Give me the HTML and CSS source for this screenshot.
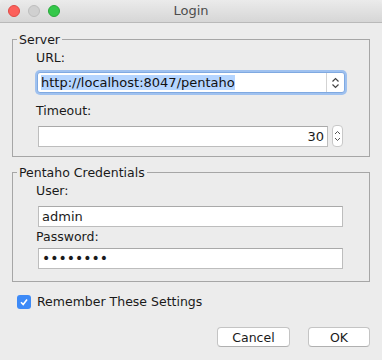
FILE: index.html
```html
<!DOCTYPE html>
<html lang="en">
<head>
  <meta charset="UTF-8">
  <title>Login</title>
  <link rel="stylesheet" href="styles.css">
</head>
<body>
  <div class="window">
    <div class="titlebar">
      <div class="lights">
        <span class="light close"></span>
        <span class="light min"></span>
        <span class="light max"></span>
      </div>
      <div class="title">Login</div>
    </div>

    <div class="content">
      <fieldset class="group server">
        <legend>Server</legend>
        <label class="field-label">URL:</label>
        <div class="combo">
          <span class="combo-text"><span class="selected">http://localhost:8047/pentaho</span></span>
          <span class="combo-btn">
            <svg width="9" height="12" viewBox="0 0 9 12"><path d="M1.5 4.5 L4.5 1.5 L7.5 4.5 M1.5 7.5 L4.5 10.5 L7.5 7.5" fill="none" stroke="#444" stroke-width="1.2"/></svg>
          </span>
        </div>
        <label class="field-label">Timeout:</label>
        <div class="spin-row">
          <div class="text-input number">30</div>
          <span class="stepper">
            <svg width="7" height="12" viewBox="0 0 7 12"><path d="M1 4 L3.5 1.5 L6 4 M1 8 L3.5 10.5 L6 8" fill="none" stroke="#555" stroke-width="1"/></svg>
          </span>
        </div>
      </fieldset>

      <fieldset class="group creds">
        <legend>Pentaho Credentials</legend>
        <label class="field-label">User:</label>
        <div class="text-input user">admin</div>
        <label class="field-label pass-label">Password:</label>
        <div class="text-input dots">••••••••</div>
      </fieldset>

      <div class="remember">
        <span class="checkbox">
          <svg width="10" height="10" viewBox="0 0 10 10"><path d="M2 5.2 L4.2 7.5 L8 2.5" fill="none" stroke="#fff" stroke-width="1.6"/></svg>
        </span>
        <span>Remember These Settings</span>
      </div>

      <div class="buttons">
        <button class="btn cancel">Cancel</button>
        <button class="btn ok">OK</button>
      </div>
    </div>
  </div>
</body>
</html>
```

FILE: styles.css
```css
body {
  margin: 0;
  background: #ececec;
}
.window {
  width: 382px;
  height: 360px;
  background: #ececec;
  border-radius: 5px 5px 0 0;
  overflow: hidden;
  font-family: "DejaVu Sans", sans-serif;
  font-size: 12.5px;
  color: #1a1a1a;
}
.titlebar {
  position: relative;
  height: 22px;
  background: linear-gradient(#ebebeb, #d6d6d6);
  border-bottom: 1px solid #b9b9b9;
}
.lights {
  display: flex;
  gap: 8px;
  padding: 5px 0 0 8px;
}
.light {
  width: 12px;
  height: 12px;
  border-radius: 50%;
  box-sizing: border-box;
}
.close {
  background: #fc605b;
  border: 1px solid #de4a45;
}
.min {
  background: #d0d0d0;
  border: 1px solid #bdbdbd;
}
.max {
  background: #34c84a;
  border: 1px solid #28a73a;
}
.title {
  position: absolute;
  top: 0;
  left: 0;
  right: 0;
  line-height: 22px;
  text-align: center;
  color: #4d4d4d;
  font-size: 13px;
}
.content {
  padding: 9px 12px 0 12px;
}
.group {
  margin: 0;
  padding: 0 24px 9px 23px;
  border: 1px solid #a6a6a6;
  min-width: 0;
}
.group legend {
  margin-left: -19px;
  padding: 0 2px;
  line-height: 15px;
}
.creds {
  margin-top: 8px;
  padding-bottom: 12px;
}
.field-label {
  display: block;
  line-height: 15px;
  margin-top: 3px;
}
.combo {
  display: flex;
  align-items: center;
  height: 21px;
  margin: 7px 0 10px 1px;
  width: 308px;
  box-sizing: border-box;
  background: #fff;
  border: 1px solid #7fa9e1;
  border-radius: 3px;
  box-shadow: 0 0 0 2px #9fc1ef;
}
.combo-text {
  flex: 1;
  padding-left: 3px;
  font-size: 13px;
  line-height: 17px;
}
.selected {
  background: #b5d5ff;
  color: #111;
}
.combo-btn {
  display: flex;
  align-items: center;
  justify-content: center;
  width: 17px;
  height: 19px;
  border-left: 1px solid #d3d3d3;
}
.spin-row {
  display: flex;
  align-items: center;
  gap: 4px;
  margin: 7px 0 0 2px;
}
.text-input {
  height: 21px;
  box-sizing: border-box;
  background: #fff;
  border: 1px solid #bdbdbd;
  border-top-color: #a9a9a9;
  padding: 0 3px;
  font-size: 13px;
  line-height: 19px;
}
.number {
  width: 290px;
  text-align: right;
}
.stepper {
  display: flex;
  align-items: center;
  justify-content: center;
  width: 11px;
  height: 22px;
  box-sizing: border-box;
  background: #fff;
  border: 1px solid #c8c8c8;
  border-radius: 4px;
}
.creds .text-input {
  width: 305px;
  margin: 8px 0 0 2px;
}
.creds .pass-label {
  margin-top: 2px;
}
.creds .text-input.dots {
  margin-top: 4px;
  font-size: 14px;
}
.remember {
  display: flex;
  align-items: center;
  gap: 6px;
  margin: 12px 0 0 5px;
}
.checkbox {
  display: flex;
  align-items: center;
  justify-content: center;
  width: 14px;
  height: 14px;
  border-radius: 3px;
  background: #3d8af7;
}
.buttons {
  display: flex;
  justify-content: flex-end;
  gap: 18px;
  margin-top: 18px;
}
.btn {
  height: 20px;
  padding: 0;
  font-family: "DejaVu Sans", sans-serif;
  font-size: 12.5px;
  color: #1a1a1a;
  background: #fff;
  border: 1px solid #c4c4c4;
  border-bottom-color: #b0b0b0;
  border-radius: 4px;
}
.cancel {
  width: 73px;
}
.ok {
  width: 62px;
}
```
